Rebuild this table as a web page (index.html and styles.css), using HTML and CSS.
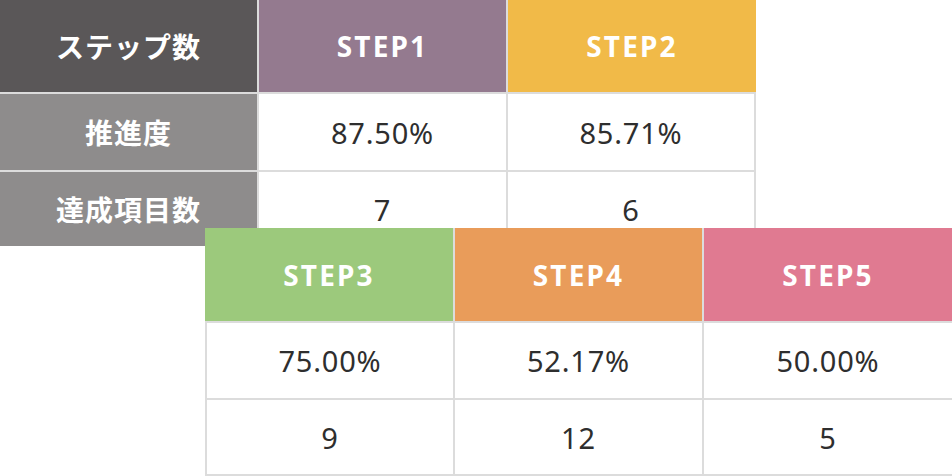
FILE: index.html
```html
<!DOCTYPE html>
<html lang="ja">
<head>
<meta charset="utf-8">
<title>ステップ数</title>
<link rel="stylesheet" href="styles.css">
</head>
<body>
<div class="stage">
  <div class="grid grid-top">
    <div class="cell head-label jp">ステップ数</div>
    <div class="cell head step1">STEP1</div>
    <div class="cell head step2">STEP2</div>
    <div class="cell label jp">推進度</div>
    <div class="cell val">87.50%</div>
    <div class="cell val last">85.71%</div>
    <div class="cell label jp">達成項目数</div>
    <div class="cell val">7</div>
    <div class="cell val last">6</div>
  </div>
  <div class="grid grid-bottom">
    <div class="cell head step3">STEP3</div>
    <div class="cell head step4">STEP4</div>
    <div class="cell head step5">STEP5</div>
    <div class="cell val first">75.00%</div>
    <div class="cell val">52.17%</div>
    <div class="cell val">50.00%</div>
    <div class="cell val first bottom">9</div>
    <div class="cell val bottom">12</div>
    <div class="cell val bottom">5</div>
  </div>
</div>
</body>
</html>
```

FILE: styles.css
```css
* { box-sizing: border-box; }
html, body { margin: 0; padding: 0; background: #ffffff; }
body { width: 952px; height: 476px; overflow: hidden; }

.stage { width: 952px; height: 476px; }

.grid {
  display: grid;
  gap: 2px;
  background: #dcdcdc;
}

.grid-top {
  width: 756px;
  grid-template-columns: 257px 247px 248px;
  grid-template-rows: 92px 76px 74px;
}

.grid-bottom {
  width: 747px;
  margin-left: 205px;
  margin-top: -18px;
  position: relative;
  grid-template-columns: 248px 247px 248px;
  grid-template-rows: 93px 75px 76px;
}

.cell {
  display: flex;
  align-items: center;
  justify-content: center;
  background: #ffffff;
}

.jp {
  font-family: "Noto Sans CJK JP", "Noto Sans", sans-serif;
  font-weight: 700;
  font-size: 28px;
  letter-spacing: 1px;
  color: #ffffff;
}

.head-label { background: #5a5758; }
.label { background: #8e8c8c; }

.head {
  font-family: "Noto Sans", "Open Sans", sans-serif;
  font-weight: 700;
  font-size: 28px;
  letter-spacing: 2.2px;
  color: #ffffff;
}

.step1 { background: #947a8f; }
.step2 { background: #f1ba48; }
.step3 { background: #9cc97c; }
.step4 { background: #e99c5a; }
.step5 { background: #e07a91; }

.val {
  font-family: "Noto Sans", "Open Sans", sans-serif;
  font-weight: 400;
  font-size: 29px;
  letter-spacing: 0.8px;
  color: #2e2e2e;
}

.last { border-right: 2px solid #dcdcdc; }
.first { border-left: 2px solid #dcdcdc; }
.bottom { border-bottom: 2px solid #dcdcdc; }
```
